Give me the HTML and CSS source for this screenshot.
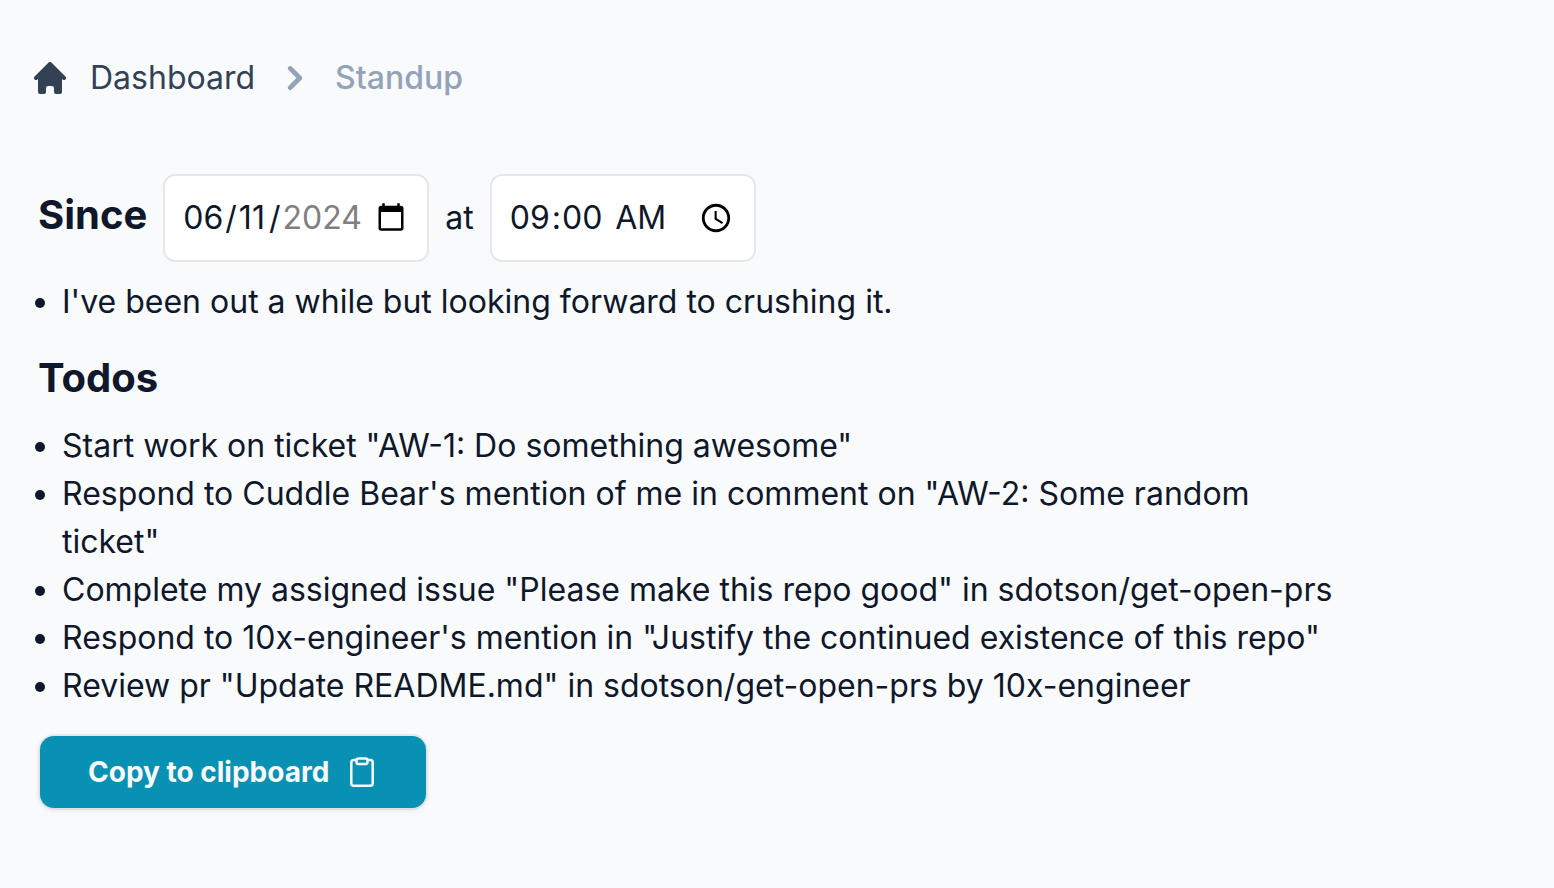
FILE: index.html
```html
<!DOCTYPE html>
<html lang="en">
<head>
    <meta charset="UTF-8">
    <meta name="viewport" content="width=device-width, initial-scale=1.0">
    <title>Standup</title>
    <link rel="stylesheet" href="styles.css">
</head>
<body>
    <nav class="breadcrumb" aria-label="Breadcrumb">
        <a href="#" class="crumb">
            <svg class="home-icon" viewBox="0 0 20 20" fill="currentColor" aria-hidden="true">
                <path d="M10.707 2.293a1 1 0 00-1.414 0l-7 7a1 1 0 001.414 1.414L4 10.414V17a1 1 0 001 1h2a1 1 0 001-1v-2a1 1 0 011-1h2a1 1 0 011 1v2a1 1 0 001 1h2a1 1 0 001-1v-6.586l.293.293a1 1 0 001.414-1.414l-7-7z"/>
            </svg>
            Dashboard
        </a>
        <svg class="chevron-icon" viewBox="0 0 20 20" fill="currentColor" aria-hidden="true">
            <path fill-rule="evenodd" d="M7.293 14.707a1 1 0 010-1.414L10.586 10 7.293 6.707a1 1 0 011.414-1.414l4 4a1 1 0 010 1.414l-4 4a1 1 0 01-1.414 0z"/>
        </svg>
        <span class="crumb-current">Standup</span>
    </nav>

    <main class="standup">
        <!-- Since -->
        <div class="since">
            <h2><label for="since-date">Since</label></h2>
            <input type="date" id="since-date" class="picker" value="2024-06-11">
            <label for="since-time">at</label>
            <input type="time" id="since-time" class="picker" value="09:00">
        </div>
        <ul class="items">
            <li>I've been out a while but looking forward to crushing it.</li>
        </ul>

        <!-- Todos -->
        <h2 class="todos-title">Todos</h2>
        <ul class="items">
            <li>Start work on ticket "AW-1: Do something awesome"</li>
            <li>Respond to Cuddle Bear's mention of me in comment on "AW-2: Some random ticket"</li>
            <li>Complete my assigned issue "Please make this repo good" in sdotson/get-open-prs</li>
            <li>Respond to 10x-engineer's mention in "Justify the continued existence of this repo"</li>
            <li>Review pr "Update README.md" in sdotson/get-open-prs by 10x-engineer</li>
        </ul>

        <button type="button" class="copy-btn">
            Copy to clipboard
            <svg class="clipboard-icon" viewBox="0 0 32 32" fill="none" stroke="currentColor" stroke-width="2.5" stroke-linejoin="round" aria-hidden="true">
                <path d="M10 4H7.800a2.500 2.500 0 0 0-2.500 2.500v20.700a2.500 2.500 0 0 0 2.500 2.500h16.400a2.500 2.500 0 0 0 2.500-2.500V6.500a2.500 2.500 0 0 0-2.500-2.500H22"/>
                <rect x="10.500" y="2.600" width="11" height="5.400" rx="2"/>
            </svg>
        </button>
    </main>
</body>
</html>
```

FILE: styles.css
```css
body {
    margin: 0;
    padding: 54px 32px;
    background-color: #f8fafc;
    color: #0f172a;
    font-family: Inter, sans-serif;
    font-size: 32px;
    line-height: 48px;
}
.breadcrumb {
    display: flex;
    align-items: center;
    margin-bottom: 72px;
}
.crumb {
    display: flex;
    align-items: center;
    gap: 20px;
    color: #334155;
    text-decoration: none;
}
.home-icon {
    width: 40px;
    height: 40px;
    margin-left: -2px;
}
.chevron-icon {
    width: 48px;
    height: 48px;
    margin: 0 16px;
    color: #94a3b8;
}
.crumb-current {
    color: #94a3b8;
    font-weight: 500;
}
.standup {
    max-width: 1310px;
}
h2 {
    margin: 0 0 0 6px;
    font-size: 40px;
    font-weight: 700;
    line-height: 52px;
}
.todos-title {
    margin-bottom: 18px;
}
.since {
    display: flex;
    align-items: baseline;
    gap: 16px;
    margin-bottom: 16px;
}
.picker {
    box-sizing: border-box;
    width: 266px;
    height: 88px;
    padding: 16px;
    border: 2px solid #e5e7eb;
    border-radius: 12px;
    background-color: #fff;
    color: inherit;
    font: inherit;
}
.picker::-webkit-datetime-edit {
    padding-left: 1px;
}
.picker::-webkit-datetime-edit-month-field,
.picker::-webkit-datetime-edit-hour-field {
    padding-right: 2px;
}
.picker::-webkit-datetime-edit-day-field {
    padding: 0 4px 0 2px;
}
.picker::-webkit-datetime-edit-year-field {
    padding-left: 2px;
    color: #808080;
}
.picker::-webkit-datetime-edit-ampm-field {
    padding-left: 6px;
}
.picker::-webkit-calendar-picker-indicator {
    margin-right: 2px;
}
.items {
    margin: 0 0 26px;
    padding-left: 30px;
}
.copy-btn {
    display: flex;
    align-items: center;
    gap: 17px;
    height: 72px;
    margin-left: 8px;
    padding: 0 48px;
    border: none;
    border-radius: 14px;
    background-color: #0891b2;
    box-shadow: 0 0 0 2px rgba(0, 0, 0, 0.06), 0 2px 6px rgba(0, 0, 0, 0.08);
    color: #f8fafc;
    font: inherit;
    font-size: 28px;
    font-weight: 700;
    cursor: pointer;
}
.clipboard-icon {
    width: 32px;
    height: 32px;
}
```
